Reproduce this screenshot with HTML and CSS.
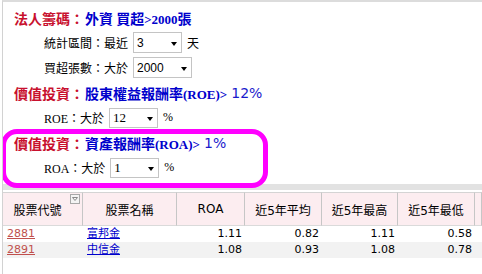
FILE: index.html
```html
<!DOCTYPE html>
<html lang="zh-Hant">
<head>
    <meta charset="UTF-8">
    <title>選股條件</title>
    <link rel="stylesheet" href="styles.css">
</head>
<body>
    <div class="page">
        <div class="filters">
            <div class="title">
                <span class="cat">法人籌碼：</span>
                <span class="cond">外資 買超<span class="en">&gt;2000</span>張</span>
            </div>
            <div class="opt">
                <span class="label">統計區間：最近</span>
                <span class="pick"><select class="pick-box sans"><option>3</option></select></span>
                <span>天</span>
            </div>
            <div class="opt">
                <span class="label">買超張數：大於</span>
                <span class="pick"><select class="pick-box sans wide"><option>2000</option></select></span>
            </div>
            <div class="title">
                <span class="cat">價值投資：</span>
                <span class="cond">股東權益報酬率<span class="en">(ROE)&gt;</span></span>
                <span class="val">12%</span>
            </div>
            <div class="opt">
                <span class="label">ROE：大於</span>
                <span class="pick"><select class="pick-box"><option>12</option></select></span>
                <span class="unit">%</span>
            </div>
            <div class="title">
                <span class="cat">價值投資：</span>
                <span class="cond">資產報酬率<span class="en">(ROA)&gt;</span></span>
                <span class="val">1%</span>
            </div>
            <div class="opt">
                <span class="label">ROA：大於</span>
                <span class="pick"><select class="pick-box"><option>1</option></select></span>
                <span class="unit">%</span>
            </div>

            <!-- annotation drawn over the ROA condition -->
            <div class="highlight"></div>
        </div>

        <div class="splitter"></div>

        <table class="grid">
            <colgroup>
                <col class="c-code">
                <col class="c-name">
                <col class="c-roa">
                <col class="c-avg">
                <col class="c-max">
                <col class="c-min">
                <col class="c-more">
            </colgroup>
            <thead>
                <tr>
                    <th class="has-filter">
                        股票代號
                        <svg class="filter-icon" width="10" height="10" viewBox="0 0 10 10">
                            <rect x="0.5" y="0.5" width="9" height="9" fill="#f4f4f4" stroke="#a8a8a8"/>
                            <path d="M2.5 3.5 H7.5 L5 6.5 Z" fill="none" stroke="#8a8a8a"/>
                        </svg>
                    </th>
                    <th>股票名稱</th>
                    <th>ROA</th>
                    <th>近5年平均</th>
                    <th>近5年最高</th>
                    <th>近5年最低</th>
                    <th></th>
                </tr>
            </thead>
            <tbody>
                <tr>
                    <td class="code"><a href="#">2881</a></td>
                    <td class="name"><a href="#">富邦金</a></td>
                    <td class="num">1.11</td>
                    <td class="num">0.82</td>
                    <td class="num">1.11</td>
                    <td class="num">0.58</td>
                    <td></td>
                </tr>
                <tr>
                    <td class="code"><a href="#">2891</a></td>
                    <td class="name"><a href="#">中信金</a></td>
                    <td class="num">1.08</td>
                    <td class="num">0.93</td>
                    <td class="num">1.08</td>
                    <td class="num">0.78</td>
                    <td></td>
                </tr>
            </tbody>
        </table>
    </div>
</body>
</html>
```

FILE: styles.css
```css
body {
    margin: 0;
    font-family: "Liberation Serif", "Noto Sans CJK TC", serif;
    font-size: 12px;
    color: #000;
    background-color: #fff;
}

.page {
    margin-left: 2px;
    height: 272px;
    border-top: 2px solid #dcdcdc;
    border-left: 1px solid #d2d2d2;
    overflow: hidden;
}

.filters {
    position: relative;
    padding: 3px 0 4px 11px;
}

.title {
    display: flex;
    align-items: center;
    height: 25px;
    font-family: "Noto Sans CJK TC", sans-serif;
    font-size: 14px;
    font-weight: bold;
    white-space: pre;
}

.cat {
    color: #c8102e;
}

.cond {
    margin-left: 1px;
    color: #0000cc;
}

.en {
    font-family: "Liberation Serif", serif;
    font-size: 13px;
}

.val {
    margin-left: 4px;
    font-family: "DejaVu Sans", sans-serif;
    font-size: 14px;
    font-weight: normal;
    color: #1a1acc;
}

.opt {
    display: flex;
    align-items: center;
    gap: 5px;
    height: 25px;
    padding-left: 30px;
}

.pick {
    position: relative;
    display: inline-block;
}

.pick::after {
    content: "";
    position: absolute;
    right: 5px;
    top: 50%;
    margin-top: -1px;
    border-left: 3.5px solid transparent;
    border-right: 3.5px solid transparent;
    border-top: 4px solid #000;
    pointer-events: none;
}

.pick-box {
    -webkit-appearance: none;
    appearance: none;
    width: 49px;
    height: 20px;
    margin: 0;
    padding: 0 0 0 3px;
    border: 1px solid #c4c4c4;
    border-radius: 0;
    background-color: #fff;
    font-family: "Liberation Serif", serif;
    font-size: 13px;
    color: #000;
}

.pick-box.sans {
    height: 21px;
    font-family: "Liberation Sans", sans-serif;
    font-size: 12px;
}

.pick-box.wide {
    width: 59px;
}

.highlight {
    position: absolute;
    left: -2px;
    top: 127px;
    width: 267px;
    height: 59px;
    box-sizing: border-box;
    border: 5px solid #ff00ff;
    border-radius: 16px;
}

.splitter {
    height: 6px;
    margin-bottom: 2px;
    background-color: #e2e2e2;
}

.grid {
    width: 479px;
    table-layout: fixed;
    border-collapse: separate;
    border-spacing: 0;
    font-family: "DejaVu Sans", "Noto Sans CJK TC", sans-serif;
    font-size: 11px;
}

.c-code { width: 80px; }
.c-name { width: 94px; }
.c-roa { width: 68px; }
.c-avg { width: 77px; }
.c-max { width: 76px; }
.c-min { width: 77px; }
.c-more { width: 7px; }

.grid th {
    height: 34px;
    padding: 0;
    box-sizing: border-box;
    background-color: #fcedf0;
    border-top: 1px solid #d4d4d4;
    border-right: 1px solid #c6c6c6;
    border-bottom: 1px solid #dadada;
    font-size: 12px;
    font-weight: normal;
    text-align: center;
}

.grid th.has-filter {
    position: relative;
    padding-right: 10px;
}

.filter-icon {
    position: absolute;
    top: 1px;
    right: 2px;
}

.grid td {
    height: 16px;
    padding: 0 3px 0 4px;
    line-height: 16px;
    white-space: nowrap;
}

.grid tbody tr:nth-child(even) td {
    background-color: #f2f2f2;
}

.grid td.num {
    text-align: right;
}

.grid a {
    color: #0000cc;
    text-decoration: underline;
}

.grid td.code a {
    color: #c0504d;
}
```
